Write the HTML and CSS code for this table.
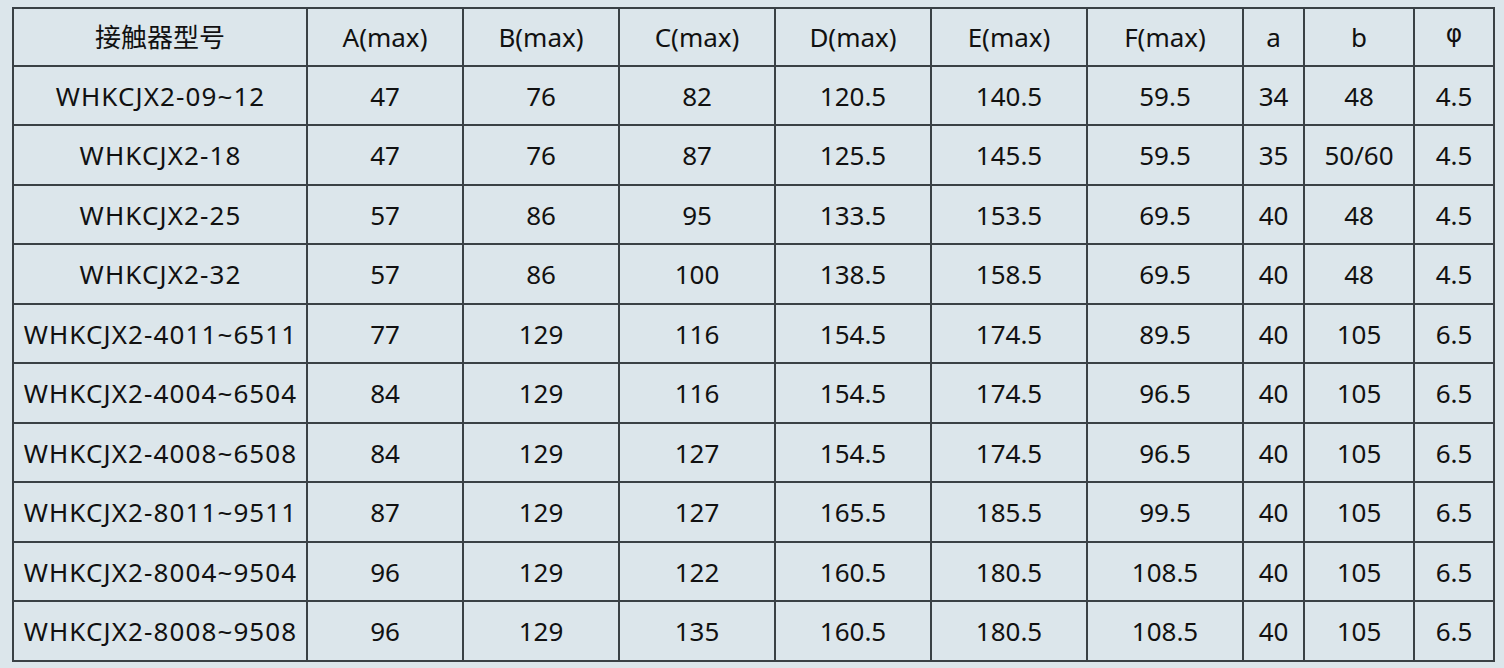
FILE: index.html
```html
<!DOCTYPE html>
<html lang="zh">
<head>
<meta charset="utf-8">
<title>接触器尺寸表</title>
<link rel="stylesheet" href="styles.css">
</head>
<body>
<div class="page">
<table class="spec">
<colgroup>
<col class="c-model"><col class="c-w"><col class="c-w"><col class="c-w"><col class="c-w"><col class="c-w"><col class="c-w"><col class="c-a"><col class="c-b"><col class="c-phi">
</colgroup>
<thead>
<tr><th>接触器型号</th><th>A(max)</th><th>B(max)</th><th>C(max)</th><th>D(max)</th><th>E(max)</th><th>F(max)</th><th>a</th><th>b</th><th><span class="phi">φ</span></th></tr>
</thead>
<tbody>
<tr><td class="model">WHKCJX2-09~12</td><td>47</td><td>76</td><td>82</td><td>120.5</td><td>140.5</td><td>59.5</td><td>34</td><td>48</td><td>4.5</td></tr>
<tr><td class="model">WHKCJX2-18</td><td>47</td><td>76</td><td>87</td><td>125.5</td><td>145.5</td><td>59.5</td><td>35</td><td>50/60</td><td>4.5</td></tr>
<tr><td class="model">WHKCJX2-25</td><td>57</td><td>86</td><td>95</td><td>133.5</td><td>153.5</td><td>69.5</td><td>40</td><td>48</td><td>4.5</td></tr>
<tr><td class="model">WHKCJX2-32</td><td>57</td><td>86</td><td>100</td><td>138.5</td><td>158.5</td><td>69.5</td><td>40</td><td>48</td><td>4.5</td></tr>
<tr><td class="model">WHKCJX2-4011~6511</td><td>77</td><td>129</td><td>116</td><td>154.5</td><td>174.5</td><td>89.5</td><td>40</td><td>105</td><td>6.5</td></tr>
<tr><td class="model">WHKCJX2-4004~6504</td><td>84</td><td>129</td><td>116</td><td>154.5</td><td>174.5</td><td>96.5</td><td>40</td><td>105</td><td>6.5</td></tr>
<tr><td class="model">WHKCJX2-4008~6508</td><td>84</td><td>129</td><td>127</td><td>154.5</td><td>174.5</td><td>96.5</td><td>40</td><td>105</td><td>6.5</td></tr>
<tr><td class="model">WHKCJX2-8011~9511</td><td>87</td><td>129</td><td>127</td><td>165.5</td><td>185.5</td><td>99.5</td><td>40</td><td>105</td><td>6.5</td></tr>
<tr><td class="model">WHKCJX2-8004~9504</td><td>96</td><td>129</td><td>122</td><td>160.5</td><td>180.5</td><td>108.5</td><td>40</td><td>105</td><td>6.5</td></tr>
<tr><td class="model">WHKCJX2-8008~9508</td><td>96</td><td>129</td><td>135</td><td>160.5</td><td>180.5</td><td>108.5</td><td>40</td><td>105</td><td>6.5</td></tr>
</tbody>
</table>
</div>
</body>
</html>
```
FILE: styles.css
```css
html, body {
  margin: 0;
  padding: 0;
  background: #dce6eb;
}
body {
  width: 1504px;
  height: 668px;
  overflow: hidden;
  font-family: "Noto Sans", "Noto Sans CJK SC", sans-serif;
  color: #111;
}
.page {
  padding: 7px 0 0 12px;
}
.spec {
  border-collapse: collapse;
  table-layout: fixed;
  width: 1481px;
  font-size: 26px;
}
.c-model { width: 294px; }
.c-w { width: 156px; }
.c-a { width: 61px; }
.c-b { width: 110px; }
.c-phi { width: 80px; }
.spec th, .spec td {
  border: 2px solid #3a4145;
  padding: 0;
  text-align: center;
  vertical-align: middle;
  font-weight: normal;
  white-space: nowrap;
  line-height: 1;
}
.spec th {
  height: 55.5px;
}
.spec td {
  height: 56.5px;
  padding-top: 1px;
}
.spec td.model {
  letter-spacing: 1.1px;
  text-indent: 1px;
}
.phi {
  font-family: "DejaVu Sans", sans-serif;
  font-size: 25px;
  position: relative;
  top: -4px;
}
```
